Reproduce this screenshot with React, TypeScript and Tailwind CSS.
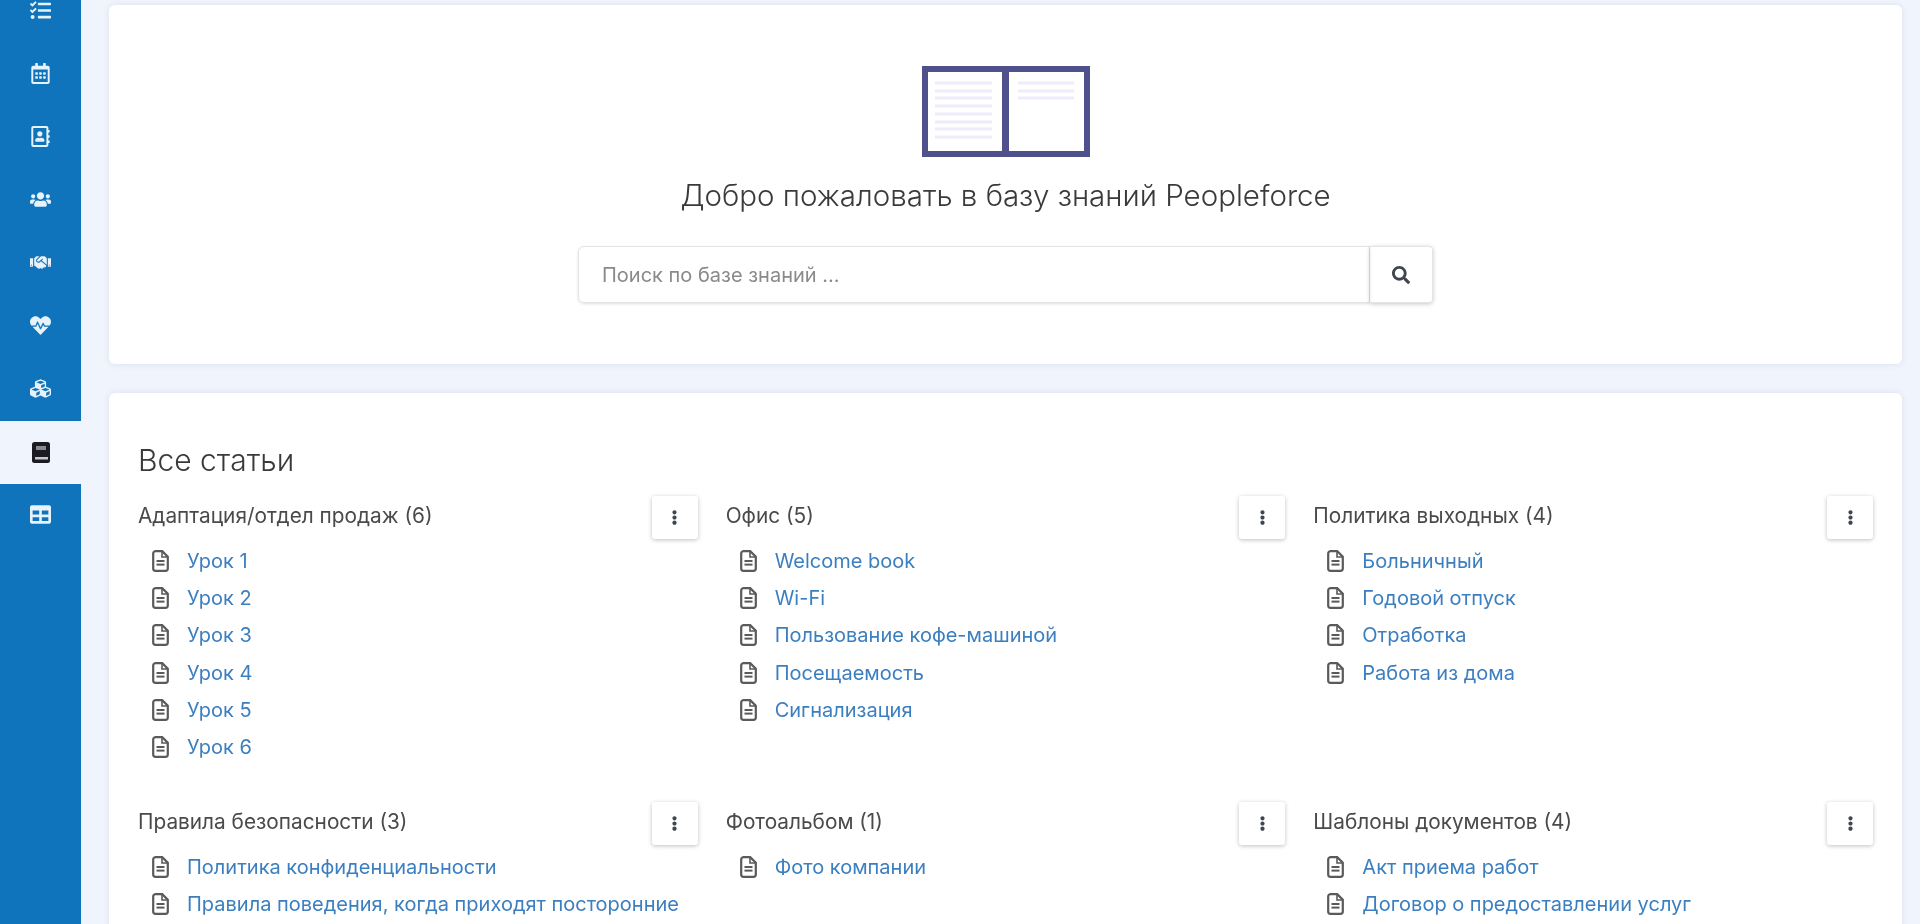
import {
  FaCubes,
  FaEllipsisV,
  FaHandshake,
  FaHeartbeat,
  FaRegAddressBook,
  FaRegCalendarAlt,
  FaSearch,
  FaTable,
  FaTasks,
  FaUsers,
} from "react-icons/fa";

const navIcons = [FaTasks, FaRegCalendarAlt, FaRegAddressBook, FaUsers, FaHandshake, FaHeartbeat, FaCubes];

const groups = [
  { title: "Адаптация/отдел продаж (6)", items: ["Урок 1", "Урок 2", "Урок 3", "Урок 4", "Урок 5", "Урок 6"] },
  { title: "Офис (5)", items: ["Welcome book", "Wi-Fi", "Пользование кофе-машиной", "Посещаемость", "Сигнализация"] },
  { title: "Политика выходных (4)", items: ["Больничный", "Годовой отпуск", "Отработка", "Работа из дома"] },
  {
    title: "Правила безопасности (3)",
    items: ["Политика конфиденциальности", "Правила поведения, когда приходят посторонние"],
  },
  { title: "Фотоальбом (1)", items: ["Фото компании"] },
  { title: "Шаблоны документов (4)", items: ["Акт приема работ", "Договор о предоставлении услуг"] },
];

function BookLogo() {
  const leftLines = [83, 91, 98, 106, 114, 122, 129, 137];
  const rightLines = [83, 91, 98];
  return (
    <svg width="168" height="91" viewBox="922 66 168 91" className="block">
      <rect x="925" y="69" width="162" height="85" fill="#fff" stroke="#50508c" strokeWidth="6" />
      <rect x="1002" y="69" width="7" height="85" fill="#50508c" />
      {leftLines.map((y) => (
        <rect key={y} x="935" y={y - 1.5} width="57" height="3" fill="#eeecfb" />
      ))}
      {rightLines.map((y) => (
        <rect key={y} x="1018" y={y - 1.5} width="56" height="3" fill="#eeecfb" />
      ))}
    </svg>
  );
}

function FileIcon() {
  return (
    <svg width="17" height="22" viewBox="0 0 17 22" className="mr-[18px] shrink-0">
      <path
        d="M3 1.2h7.2l5.6 5.6V18.5a2.3 2.3 0 0 1-2.3 2.3H3.5a2.3 2.3 0 0 1-2.3-2.3V3.5A2.3 2.3 0 0 1 3 1.2z"
        fill="#fff"
        stroke="#5a5a5a"
        strokeWidth="2.2"
      />
      <path d="M10 1.5v5.5h5.5" fill="none" stroke="#5a5a5a" strokeWidth="1.6" />
      <rect x="4.5" y="10" width="8" height="2" fill="#5a5a5a" />
      <rect x="4.5" y="13.6" width="8" height="2" fill="#5a5a5a" />
    </svg>
  );
}

function BookIcon() {
  return (
    <svg width="18" height="21" viewBox="0 0 18 21">
      <rect x="0" y="0" width="18" height="21" rx="2.5" fill="#1b1b26" />
      <rect x="4" y="4" width="10" height="4" fill="#8a8a8a" />
      <rect x="3" y="15" width="13" height="2.5" fill="#c9c9c9" />
    </svg>
  );
}

function Group({ title, items }: { title: string; items: string[] }) {
  return (
    <div className="h-[306px]">
      <div className="flex h-[44px] items-start justify-between">
        <span className="mt-[8px] text-[20.8px] leading-[24px] text-[#4a4a4a]">{title}</span>
        <button className="flex h-[43px] w-[46px] items-center justify-center rounded-[3px] bg-white text-[15px] text-[#3f4650] shadow-[0_1px_4px_rgba(0,0,0,0.25)]">
          <FaEllipsisV />
        </button>
      </div>
      <ul className="mt-[2px] pl-[14px]">
        {items.map((item) => (
          <li key={item} className="flex h-[37.3px] items-center">
            <FileIcon />
            <a className="text-[20px] whitespace-nowrap text-[#3c7fc0]">{item}</a>
          </li>
        ))}
      </ul>
    </div>
  );
}

export default function App() {
  return (
    <div className="flex h-[924px] overflow-hidden bg-[#f0f4fc] font-['Inter',sans-serif] blur-[0.4px]">
      <aside className="w-[81px] shrink-0 overflow-hidden bg-[#0f74bb]">
        <div className="-mt-[20px]">
          {navIcons.map((Icon, i) => (
            <div key={i} className="flex h-[63px] items-center justify-center pb-[2px] text-[21px] text-[#e8f2fa]">
              <Icon />
            </div>
          ))}
          <div className="flex h-[63px] items-center justify-center bg-[#f0f4fc]">
            <BookIcon />
          </div>
          <div className="flex h-[63px] items-center justify-center pb-[2px] text-[21px] text-[#e8f2fa]">
            <FaTable />
          </div>
        </div>
      </aside>
      <main className="ml-[28px] w-[1793px] pt-[5px]">
        <section className="flex h-[359px] flex-col items-center rounded-[6px] bg-white pt-[61px] shadow-[0_0_6px_rgba(60,80,140,0.12)]">
          <BookLogo />
          <h1 className="mt-[20px] text-[29.5px] leading-[36px] font-light text-[#3a3a3a]">
            Добро пожаловать в базу знаний Peopleforce
          </h1>
          <div className="mt-[33px] flex h-[57px] w-[855px]">
            <div className="flex flex-1 items-center rounded-l-[6px] border border-[#e2e4e8] pl-[23px] text-[20px] text-[#8a8a8a] shadow-[0_1px_3px_rgba(0,0,0,0.12)]">
              Поиск по базе знаний ...
            </div>
            <button className="flex w-[63px] items-center justify-center rounded-r-[4px] border border-l-0 border-[#e2e4e8] text-[18px] text-[#3f4650] shadow-[0_1px_4px_rgba(0,0,0,0.22)]">
              <FaSearch />
            </button>
          </div>
        </section>
        <section className="mt-[29px] h-[560px] rounded-[6px] bg-white px-[29px] pt-[50px] shadow-[0_0_6px_rgba(60,80,140,0.12)]">
          <h2 className="text-[30px] leading-[34px] font-light text-[#3a3a3a]">Все статьи</h2>
          <div className="mt-[19px] grid grid-cols-3 gap-x-[28px]">
            {groups.map((g) => (
              <Group key={g.title} title={g.title} items={g.items} />
            ))}
          </div>
        </section>
      </main>
    </div>
  );
}
